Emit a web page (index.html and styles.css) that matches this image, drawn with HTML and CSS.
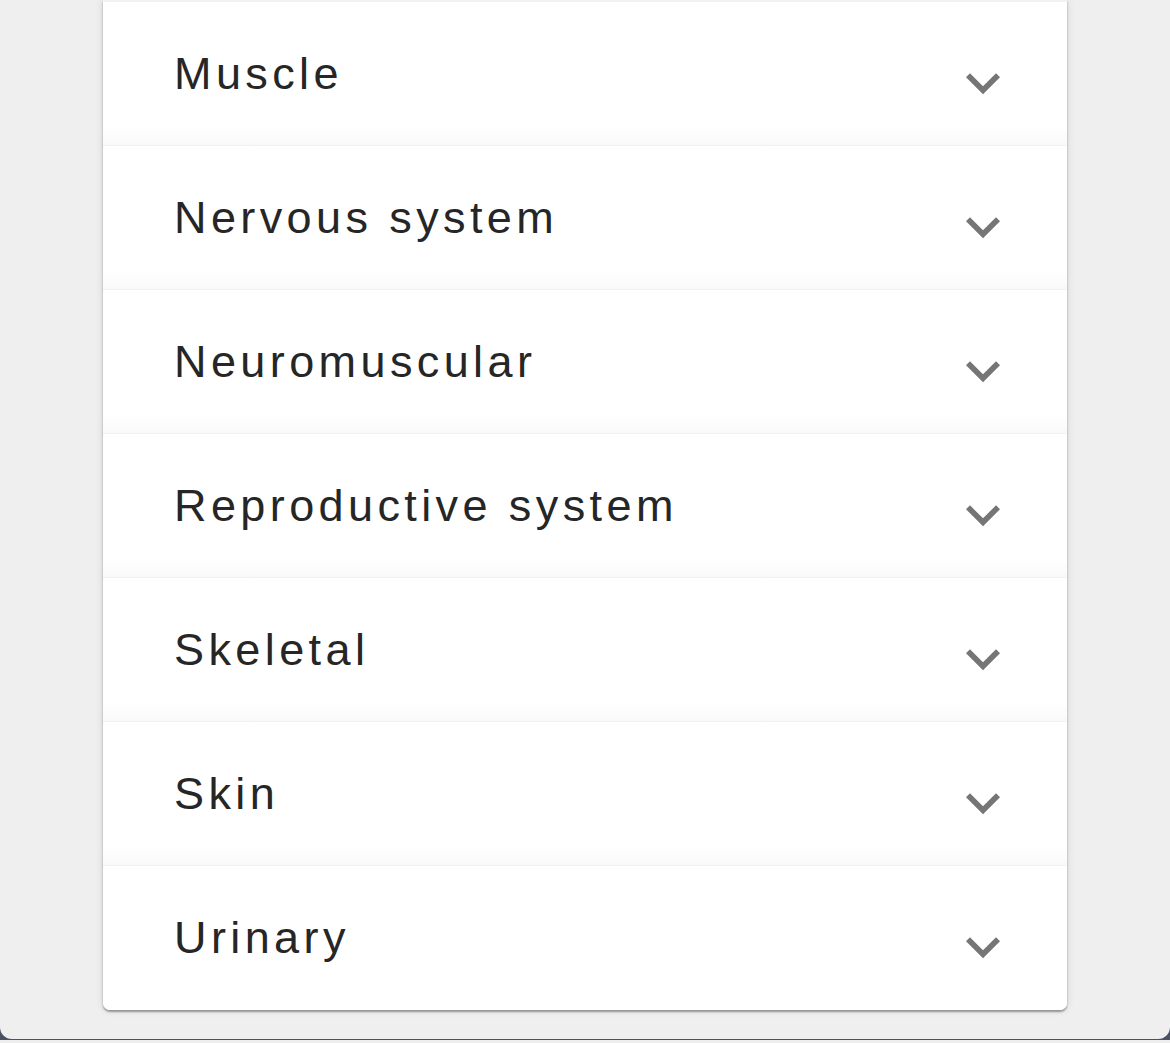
FILE: index.html
```html
<!DOCTYPE html>
<html lang="en">
<head>
<meta charset="utf-8">
<title>Systems</title>
<link rel="stylesheet" href="styles.css">
</head>
<body>
<div class="screen">
  <div class="card">
    <div class="row"><span class="label">Muscle</span><svg class="chev" viewBox="0 0 24 24"><path d="M16.59 8.59L12 13.17 7.41 8.59 6 10l6 6 6-6z"/></svg></div>
    <div class="row"><span class="label">Nervous system</span><svg class="chev" viewBox="0 0 24 24"><path d="M16.59 8.59L12 13.17 7.41 8.59 6 10l6 6 6-6z"/></svg></div>
    <div class="row"><span class="label">Neuromuscular</span><svg class="chev" viewBox="0 0 24 24"><path d="M16.59 8.59L12 13.17 7.41 8.59 6 10l6 6 6-6z"/></svg></div>
    <div class="row"><span class="label">Reproductive system</span><svg class="chev" viewBox="0 0 24 24"><path d="M16.59 8.59L12 13.17 7.41 8.59 6 10l6 6 6-6z"/></svg></div>
    <div class="row"><span class="label">Skeletal</span><svg class="chev" viewBox="0 0 24 24"><path d="M16.59 8.59L12 13.17 7.41 8.59 6 10l6 6 6-6z"/></svg></div>
    <div class="row"><span class="label">Skin</span><svg class="chev" viewBox="0 0 24 24"><path d="M16.59 8.59L12 13.17 7.41 8.59 6 10l6 6 6-6z"/></svg></div>
    <div class="row"><span class="label">Urinary</span><svg class="chev" viewBox="0 0 24 24"><path d="M16.59 8.59L12 13.17 7.41 8.59 6 10l6 6 6-6z"/></svg></div>
  </div>
</div>
<div class="footer-line"></div>
</body>
</html>
```

FILE: styles.css
```css
html, body {
  margin: 0;
  padding: 0;
}
body {
  background: #eeeeee;
  font-family: "Liberation Sans", Arial, Helvetica, sans-serif;
  overflow: hidden;
}
.screen {
  height: 1039px;
  background: #efefef;
  border-radius: 0 0 12px 12px;
  box-shadow: 0 0 0 20px #4a5262;
  clip-path: inset(0 0 -1px 0);
  padding-left: 103px;
  box-sizing: border-box;
  position: relative;
}
.footer-line {
  height: 1px;
  background: #a8a8a8;
}
.card {
  width: 964px;
  background: #f2f2f2;
  padding-top: 1px;
  border-radius: 0 0 7px 7px;
  box-shadow: 0 2px 2px rgba(0, 0, 0, 0.35), 0 0 8px rgba(0, 0, 0, 0.12);
}
.row {
  margin-top: 1px;
  height: 143px;
  display: flex;
  align-items: center;
  justify-content: space-between;
  padding: 0 50px 0 71px;
  background: linear-gradient(to bottom, #ffffff 88%, #f9f9f9 100%);
}
.row:last-child {
  height: 144px;
  background: #ffffff;
  border-radius: 0 0 7px 7px;
}
.label {
  font-size: 45px;
  letter-spacing: 4.4px;
  color: #262626;
}
.chev {
  width: 68px;
  height: 68px;
  margin-top: 18px;
  fill: #757575;
  flex-shrink: 0;
}
```
